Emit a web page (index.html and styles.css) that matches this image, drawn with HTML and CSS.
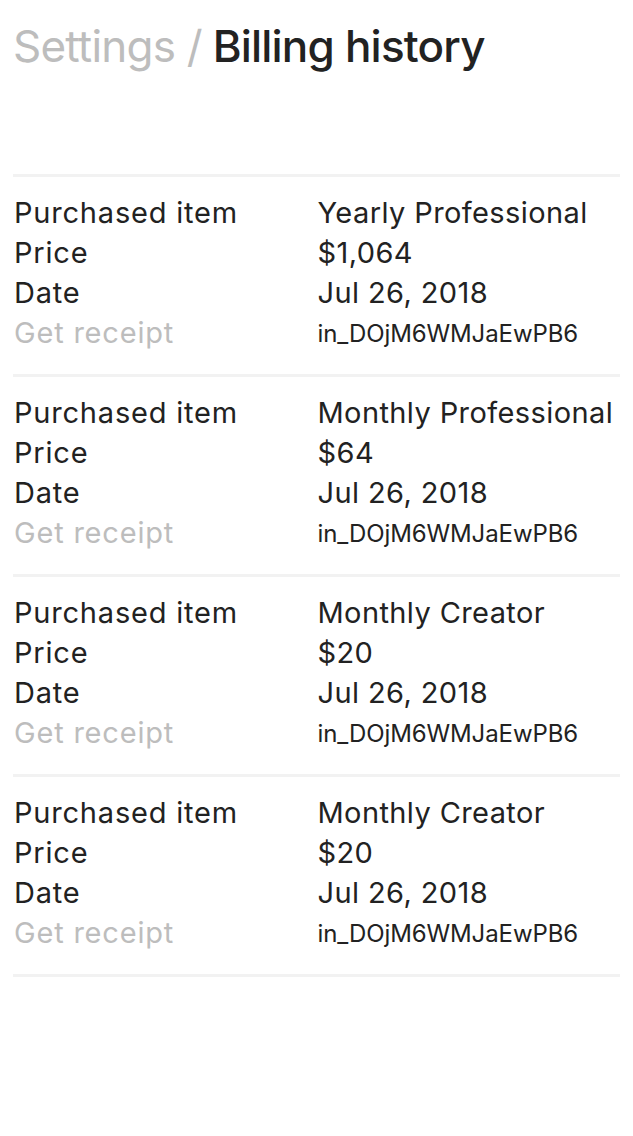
FILE: index.html
```html
<!DOCTYPE html>
<html lang="en">

<head>
  <meta charset="UTF-8">
  <meta name="viewport" content="width=device-width, initial-scale=1.0">
  <title>Billing history</title>
  <link rel="stylesheet" href="styles.css">
</head>

<body>
  <h1 class="page-title"><span class="crumb">Settings /</span> Billing history</h1>

  <div class="billing-list">
    <div class="billing-row">
      <div class="label">Purchased item</div>
      <div class="value">Yearly Professional</div>
      <div class="label">Price</div>
      <div class="value">$1,064</div>
      <div class="label">Date</div>
      <div class="value">Jul 26, 2018</div>
      <div class="label receipt">Get receipt</div>
      <div class="value invoice">in_DOjM6WMJaEwPB6</div>
    </div>
    <div class="billing-row">
      <div class="label">Purchased item</div>
      <div class="value">Monthly Professional</div>
      <div class="label">Price</div>
      <div class="value">$64</div>
      <div class="label">Date</div>
      <div class="value">Jul 26, 2018</div>
      <div class="label receipt">Get receipt</div>
      <div class="value invoice">in_DOjM6WMJaEwPB6</div>
    </div>
    <div class="billing-row">
      <div class="label">Purchased item</div>
      <div class="value">Monthly Creator</div>
      <div class="label">Price</div>
      <div class="value">$20</div>
      <div class="label">Date</div>
      <div class="value">Jul 26, 2018</div>
      <div class="label receipt">Get receipt</div>
      <div class="value invoice">in_DOjM6WMJaEwPB6</div>
    </div>
    <div class="billing-row">
      <div class="label">Purchased item</div>
      <div class="value">Monthly Creator</div>
      <div class="label">Price</div>
      <div class="value">$20</div>
      <div class="label">Date</div>
      <div class="value">Jul 26, 2018</div>
      <div class="label receipt">Get receipt</div>
      <div class="value invoice">in_DOjM6WMJaEwPB6</div>
    </div>
  </div>
</body>

</html>
```

FILE: styles.css
```css
body {
  font-family: Inter, "Noto Sans", sans-serif;
  background-color: #fff;
  color: #222;
  margin: 0;
  padding: 20px 13px 0;
}

.page-title {
  font-size: 44px;
  line-height: 52px;
  font-weight: 500;
  letter-spacing: -0.8px;
  color: #222;
  margin: 0 0 102px;
}

.crumb {
  color: #bdbdbd;
  font-weight: 400;
}

.billing-list {
  border-bottom: 3px solid #f2f2f2;
}

.billing-row {
  display: grid;
  grid-template-columns: 1fr 1fr;
  border-top: 3px solid #f2f2f2;
  padding: 16px 0 21px;
}

.label,
.value {
  font-size: 29px;
  line-height: 40px;
  letter-spacing: 0.4px;
  padding-left: 1px;
  white-space: nowrap;
}

.label {
  letter-spacing: 0.8px;
}

.receipt {
  color: #bdbdbd;
}

.invoice {
  font-size: 24px;
  line-height: 38px;
  padding-top: 2px;
  letter-spacing: -0.1px;
}
```
